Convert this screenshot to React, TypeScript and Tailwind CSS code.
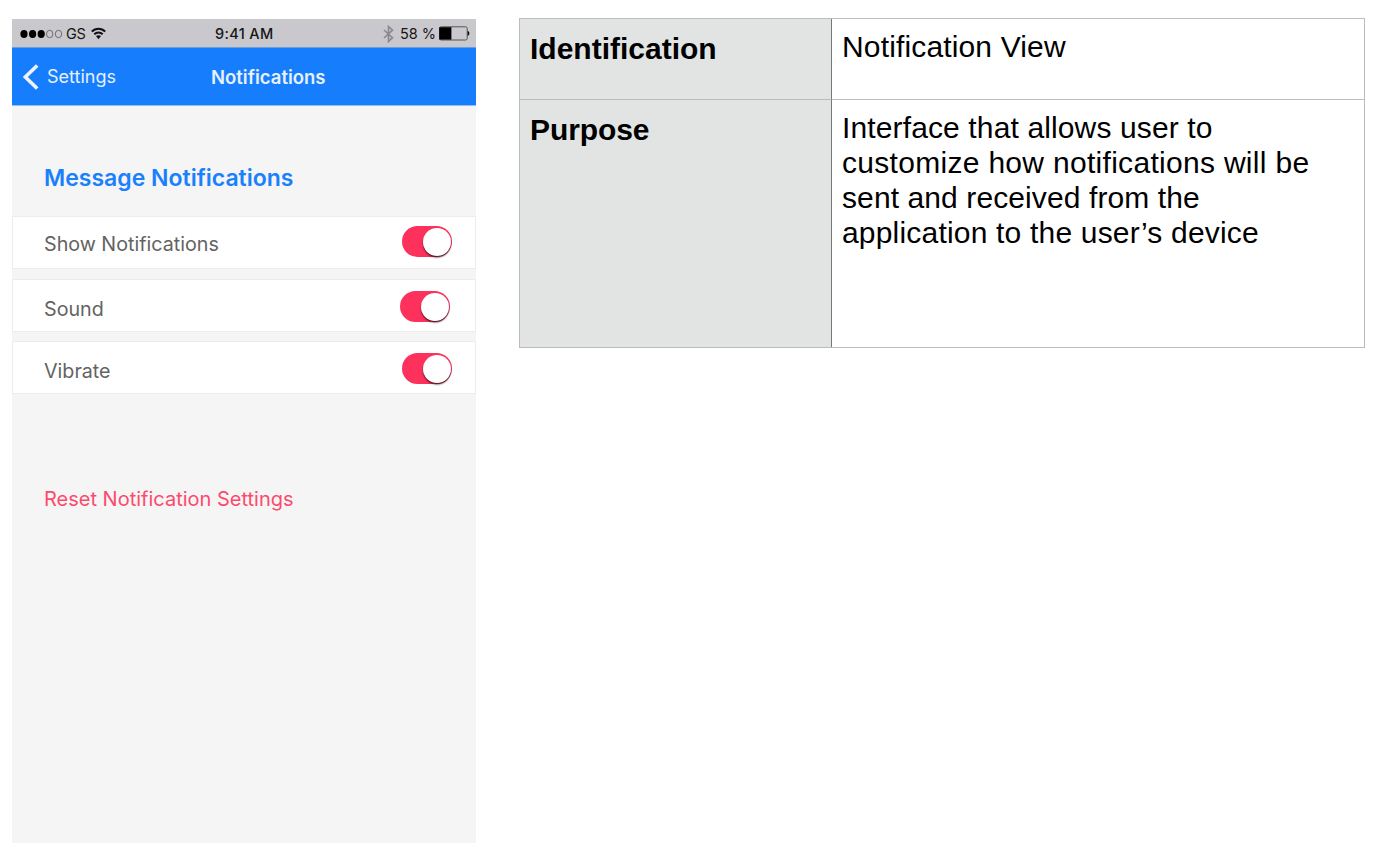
type SettingRowProps = {
  label: string;
  className: string;
  toggleClassName: string;
};

function Toggle({ className }: { className: string }) {
  return (
    <button
      type="button"
      role="switch"
      aria-checked="true"
      className={`flex h-[31px] w-[50px] shrink-0 items-center justify-end rounded-full bg-[#fd315c] pr-px ${className}`}
    >
      <span className="h-[28px] w-[28px] rounded-full bg-white shadow-[0_1.5px_1.5px_rgba(50,10,20,0.8)]" />
    </button>
  );
}

function SettingRow({ label, className, toggleClassName }: SettingRowProps) {
  return (
    <div
      className={`flex shrink-0 items-center justify-between border border-[#ececec] bg-white pl-[31px] text-[19.7px] leading-6 text-[#636363] ${className}`}
    >
      <span>{label}</span>
      <Toggle className={toggleClassName} />
    </div>
  );
}

function StatusBar() {
  return (
    <div className="flex h-7 shrink-0 items-center bg-[#c9c8cd] pt-px text-[14.5px] leading-5 text-[#161616]">
      <svg className="ml-2 shrink-0" width="43" height="12" viewBox="0 0 43 12">
        <ellipse cx="4" cy="6" rx="3.6" ry="4" fill="#000" />
        <ellipse cx="12.6" cy="6" rx="3.6" ry="4" fill="#000" />
        <ellipse cx="21.2" cy="6" rx="3.6" ry="4" fill="#000" />
        <ellipse cx="29.7" cy="6" rx="3.2" ry="3.7" fill="none" stroke="#555" strokeWidth="0.8" />
        <ellipse cx="38.5" cy="6" rx="3.2" ry="3.7" fill="none" stroke="#555" strokeWidth="0.8" />
      </svg>
      <span className="ml-[3px] w-[21px] whitespace-nowrap tracking-[-0.2px]">GS</span>
      <svg className="ml-1 shrink-0" width="15" height="13" viewBox="0 0 15 13">
        <g fill="none" stroke="#111" strokeWidth="2">
          <path d="M.8 4.6C4.6.7 10.4.7 14.2 4.6" />
          <path d="M3.3 7.3C5.7 4.9 9.3 4.9 11.7 7.3" />
        </g>
        <path d="M5 9.1C6.4 7.8 8.6 7.8 10 9.1L7.5 12.3Z" fill="#111" />
      </svg>
      <span className="ml-[109px] w-[59px] whitespace-nowrap font-medium tracking-[0.35px]">9:41 AM</span>
      <svg className="ml-[109px] shrink-0" width="11" height="18" viewBox="0 0 11 18">
        <path d="M1 5L9.5 12.7L5.5 16.5V1.5L9.5 5.2L1 13" fill="none" stroke="#89888c" strokeWidth="1.6" />
      </svg>
      <span className="ml-[6px] w-[37px] whitespace-nowrap">58 %</span>
      <svg className="ml-[2px] shrink-0" width="31" height="15" viewBox="0 0 31 15">
        <rect x=".6" y=".8" width="27.6" height="13.2" rx="1.6" fill="none" stroke="#555" strokeWidth="1" />
        <path d="M.2 1.2H12.4V13.6H.2Z" fill="#000" />
        <path d="M28.6 4.8C31 5.8 31 9 28.6 10Z" fill="#111" />
      </svg>
    </div>
  );
}

function Phone() {
  return (
    <section className="flex h-[824px] w-[464px] shrink-0 flex-col bg-[#f5f5f5] font-['Inter',sans-serif]">
      <StatusBar />
      <header className="grid h-[59px] shrink-0 grid-cols-[199px_1fr] items-center border-t border-b border-t-[#6d9edb] border-b-[#94bbed] bg-[#167efc] text-[#e7f0fe]">
        <a className="flex items-center pl-[11px] text-[18px] leading-6">
          <svg width="16" height="26" viewBox="0 0 16 26">
            <path d="M14.2 1.5L2.3 13L14.2 24.5" fill="none" stroke="#eef3fb" strokeWidth="3.6" />
          </svg>
          <span className="ml-2 pt-px whitespace-nowrap">Settings</span>
        </a>
        <h1 className="whitespace-nowrap pt-px text-[18.5px] leading-6 font-semibold">Notifications</h1>
      </header>
      <h2 className="mt-[58px] ml-8 h-7 shrink-0 whitespace-nowrap text-[23px] leading-7 font-semibold text-[#1a80fb]">
        Message Notifications
      </h2>
      <SettingRow label="Show Notifications" className="mt-[24px] h-[53px] pt-[2px]" toggleClassName="mr-[23px] mb-[4px]" />
      <SettingRow label="Sound" className="mt-[10px] h-[53px] pt-[6px]" toggleClassName="mr-[25px] mb-[4px]" />
      <SettingRow label="Vibrate" className="mt-[9px] h-[53px] pt-[6px]" toggleClassName="mr-[23px] mb-[4px]" />
      <button
        type="button"
        className="mt-[93px] ml-8 h-6 self-start whitespace-nowrap text-[20px] leading-6 text-[#fc4a6f]"
      >
        Reset Notification Settings
      </button>
    </section>
  );
}

function Description() {
  return (
    <div className="mt-[-1px] ml-[43px] grid h-[330px] w-[846px] grid-cols-[312px_1fr] grid-rows-[81px_1fr] border border-[#bcbcbc] font-['Liberation_Sans',sans-serif] text-[30px] leading-[35px] text-black">
      <div className="border-r border-b border-r-[#777] border-b-[#bcbcbc] bg-[#e2e4e3] pt-3 pl-[10px] font-bold">
        Identification
      </div>
      <div className="border-b border-[#bcbcbc] pt-[10px] pl-[10px] tracking-[0.15px]">Notification View</div>
      <div className="border-r border-[#777] bg-[#e2e4e3] pt-3 pl-[10px] font-bold tracking-[-0.1px]">Purpose</div>
      <p className="flex flex-col items-start whitespace-nowrap pt-[10px] pl-[10px]">
        <span className="tracking-[0.13px]">Interface that allows user to</span>
        <span className="tracking-[0.3px]">customize how notifications will be</span>
        <span className="tracking-[0.1px]">sent and received from the</span>
        <span className="tracking-[0.19px]">application to the user’s device</span>
      </p>
    </div>
  );
}

export default function App() {
  return (
    <main className="flex h-[860px] w-[1384px] items-start overflow-hidden bg-white pt-[19px] pl-3">
      <Phone />
      <Description />
    </main>
  );
}
